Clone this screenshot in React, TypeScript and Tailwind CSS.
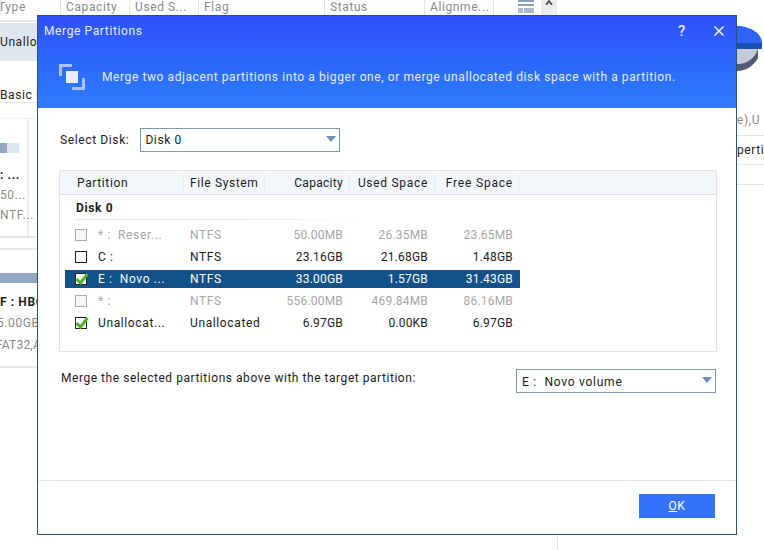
const font = { fontFamily: "Roboto, sans-serif" };

function Check({ state }: { state: "off" | "dis" | "on" }) {
  if (state === "dis") return <span className="block w-3 h-3 border border-[#a8a8a8] bg-[#f4f4f4]" />;
  if (state === "off") return <span className="block w-3 h-3 border border-[#222] bg-white" />;
  return (
    <span className="block relative w-3 h-3 border border-[#222] bg-white">
      <svg viewBox="0 0 14 14" className="absolute left-[-1px] top-[-2px] w-[14px] h-[14px]">
        <path d="M1.5 7 L5.5 11 L12.5 2" fill="none" stroke="#4db31c" strokeWidth="3" />
      </svg>
    </span>
  );
}

const rows = [
  { c: "dis", n: "* :  Reser...", fs: "NTFS", a: "50.00MB", b: "26.35MB", d: "23.65MB", k: "dis" },
  { c: "off", n: "C :", fs: "NTFS", a: "23.16GB", b: "21.68GB", d: "1.48GB", k: "norm" },
  { c: "on", n: "E :  Novo ...", fs: "NTFS", a: "33.00GB", b: "1.57GB", d: "31.43GB", k: "sel" },
  { c: "dis", n: "* :", fs: "NTFS", a: "556.00MB", b: "469.84MB", d: "86.16MB", k: "dis" },
  { c: "on", n: "Unallocat...", fs: "Unallocated", a: "6.97GB", b: "0.00KB", d: "6.97GB", k: "norm" },
] as const;

function Caret() {
  return <span className="w-0 h-0 mb-[3px] border-l-[5px] border-r-[5px] border-t-[6px] border-l-transparent border-r-transparent border-t-[#6f90bd]" />;
}

function Background() {
  return (
    <div className="absolute inset-0 text-[12px] tracking-[0.6px] text-[#8a8a8a]">
      {[["Type", -2, 0], ["Capacity", 66, 60], ["Used S...", 135, 129], ["Flag", 204, 198], ["Status", 330, 324], ["Alignme...", 430, 424]].map(([t, x, s]) => (
        <div key={t as string}>
          <span className="absolute top-0 leading-[14px]" style={{ left: x as number }}>{t}</span>
          <span className="absolute top-0 h-[15px] w-px bg-[#e4e4e4]" style={{ left: s as number }} />
        </div>
      ))}
      <span className="absolute left-[493px] top-0 h-[15px] w-px bg-[#e4e4e4]" />
      <svg viewBox="0 0 16 14" className="absolute left-[518px] top-0 w-4 h-[14px]">
        <rect x="0" y="0" width="16" height="2" fill="#8ea0ba" />
        <rect x="0" y="4" width="16" height="2" fill="#8ea0ba" />
        <rect x="0" y="8" width="5" height="5" fill="#aebbd0" />
        <rect x="6" y="8" width="10" height="5" fill="#aebbd0" />
      </svg>
      <div className="absolute left-[541px] top-0 w-4 h-[15px] bg-[#ececec] flex justify-center">
        <svg viewBox="0 0 8 5" className="w-2 h-[5px]"><path d="M1 5 L4 1 L7 5" stroke="#444" strokeWidth="1.6" fill="none" /></svg>
      </div>
      <div className="absolute left-0 top-[20px] w-[37px] h-[2px] bg-[#e8e8e8]" />
      <div className="absolute left-0 top-[23px] w-[37px] h-[38px] bg-[#dfe6f0] text-[#222] leading-[38px] overflow-hidden whitespace-nowrap">Unalloc</div>
      <div className="absolute left-0 top-[88px] w-[37px] text-[#222] leading-[14px] overflow-hidden whitespace-nowrap">Basic D</div>
      <div className="absolute left-0 top-[102px] w-[37px] h-px bg-[#e4e4e4]" />
      <div className="absolute left-0 top-[118px] w-[37px] h-px bg-[#eeeeee]" />
      <div className="absolute left-[27px] top-[118px] w-[2px] h-[118px] bg-[#eeeeee]" />
      <div className="absolute left-0 top-[143px] w-[19px] h-[10px] bg-[#dfe6f0]"><div className="w-[7px] h-full bg-[#94a8c4]" /></div>
      <div className="absolute left-0 top-[168px] font-bold text-[#222] leading-[14px] whitespace-nowrap">: ...</div>
      <div className="absolute left-0 top-[188px] leading-[14px]">50...</div>
      <div className="absolute left-0 top-[208px] leading-[14px]">NTF...</div>
      <div className="absolute left-0 top-[236px] w-[37px] h-[2px] bg-[#e8e8e8]" />
      <div className="absolute left-0 top-[248px] w-[37px] h-[2px] bg-[#e8e8e8]" />
      <div className="absolute left-0 top-[273px] w-[37px] h-[10px] bg-[#94a8c4]" />
      <div className="absolute left-0 top-[295px] w-[37px] font-bold text-[#222] leading-[14px] overflow-hidden whitespace-nowrap">F : HBO</div>
      <div className="absolute left-[-3px] top-[316px] w-[40px] leading-[14px] overflow-hidden whitespace-nowrap">5.00GB</div>
      <div className="absolute left-[-4px] top-[338px] w-[41px] leading-[14px] overflow-hidden whitespace-nowrap tracking-[0.2px]">FAT32,A</div>
      <div className="absolute left-0 top-[366px] w-[37px] h-[2px] bg-[#e8e8e8]" />
      <svg viewBox="0 0 27 46" className="absolute left-[737px] top-[26px] w-[27px] h-[46px]">
        <path d="M0 0 C 14 0 25 8 25 17 L25 22 L0 22 Z" fill="#2f63f5" />
        <rect x="0" y="17" width="25" height="6" fill="#1a4fb8" />
        <path d="M0 23 H21 C 19 33 10 38 0 38 Z" fill="#c5ccd8" />
        <path d="M21 23 V32 C 16 41 8 45 0 45 V38 C 10 38 18 32 21 23 Z" fill="#505a72" />
      </svg>
      <div className="absolute left-[730px] top-[113px] text-[#8a8a8a] leading-[14px] whitespace-nowrap">ee),U</div>
      <div className="absolute left-[737px] top-[135px] w-[27px] h-px bg-[#e4e4e4]" />
      <div className="absolute left-[737px] top-[143px] text-[#222] leading-[14px] whitespace-nowrap">pertie</div>
      <div className="absolute left-[737px] top-[164px] w-[27px] h-px bg-[#e4e4e4]" />
      <div className="absolute left-[737px] top-[184px] w-[27px] h-px bg-[#e4e4e4]" />
      <div className="absolute left-[557px] top-[535px] w-px h-[15px] bg-[#e4e4e4]" />
    </div>
  );
}

export default function App() {
  return (
    <div className="relative w-[764px] h-[550px] overflow-hidden bg-white" style={font}>
      <Background />
      <div className="absolute left-[37px] top-[15px] w-[700px] h-[520px] border border-[#2d5273] bg-white flex flex-col">
        <div className="h-[92px] shrink-0 bg-gradient-to-b from-[#2f4ffe] to-[#2e7dfd] text-white flex flex-col">
          <div className="flex items-center h-[30px] pl-[6px] pr-[10px] text-[12px] tracking-[0.62px] text-[#e6edff]">
            <span className="flex-1">Merge Partitions</span>
            <span className="w-[35px] text-[15px] font-medium">?</span>
            <svg viewBox="0 0 12 12" className="w-3 h-3 mr-[1px]"><path d="M1.5 1.5 L10.5 10.5 M10.5 1.5 L1.5 10.5" stroke="#e6edff" strokeWidth="1.6" /></svg>
          </div>
          <div className="flex items-center pl-[21px] mt-[18px] gap-[17px] text-[12px] tracking-[0.59px] text-[#e6edff]">
            <svg viewBox="0 0 26 26" className="w-[26px] h-[26px]">
              <path d="M1.5 12 V1.5 H13" fill="none" stroke="#a9c4fb" strokeWidth="3" />
              <path d="M24.5 14 V24.5 H13" fill="none" stroke="#a9c4fb" strokeWidth="3" />
              <rect x="7" y="7" width="12" height="12" fill="#e8eeff" />
            </svg>
            <span>Merge two adjacent partitions into a bigger one, or merge unallocated disk space with a partition.</span>
          </div>
        </div>

        <div className="flex-1 flex flex-col text-[12px] tracking-[0.62px] text-[#1c1c1c]">
          <div className="flex items-center mt-[20px] ml-[22px] gap-[11px]">
            <span>Select Disk:</span>
            <div className="w-[200px] h-[24px] border border-[#7d98b4] flex items-center justify-between pl-[4px] pr-[3px]">
              <span>Disk 0</span>
              <Caret />
            </div>
          </div>

          <div className="mt-[18px] ml-[21px] w-[658px] h-[182px] border border-[#e3e3e3]">
            <div className="h-[24px] pt-[2px] bg-[#f3f7fc] border-b border-[#dbe1ea] grid grid-cols-[124px_81px_85px_85px_84px] items-center">
              <span className="pl-[17px] border-r border-[#e6ebf2] h-[17px] leading-[17px]">Partition</span>
              <span className="pl-[6px] border-r border-[#e6ebf2] h-[17px] leading-[17px]">File System</span>
              <span className="text-right pr-[6px] border-r border-[#e6ebf2] h-[17px] leading-[17px] tracking-[0.3px]">Capacity</span>
              <span className="text-right pr-[6px] border-r border-[#e6ebf2] h-[17px] leading-[17px] tracking-[0.7px]">Used Space</span>
              <span className="text-right pr-[5px] border-r border-[#e6ebf2] h-[17px] leading-[17px] tracking-[0.8px]">Free Space</span>
            </div>
            <div className="pl-[5px]">
              <div className="h-[25px] ml-[11px] relative flex items-center font-bold">
                Disk 0
                <span className="absolute left-0 bottom-0 w-[295px] h-px bg-gradient-to-r from-gray-200 via-gray-200 to-white" />
              </div>
              <div className="pt-[4px]">
                {rows.map((r) => (
                  <div key={r.n} className="h-[22px] flex items-center">
                    <div
                      className={
                        "w-[455px] h-[18px] grid grid-cols-[125px_75px_78px_85px_85px] items-center leading-[18px] " +
                        (r.k === "sel" ? "bg-[#125189] text-white" : r.k === "dis" ? "text-[#a6a6a6]" : "text-[#1c1c1c]")
                      }
                    >
                      <div className="flex items-center pl-[10px] gap-[11px] whitespace-nowrap">
                        <Check state={r.c} />
                        <span className="whitespace-pre">{r.n}</span>
                      </div>
                      <span>{r.fs}</span>
                      <span className="text-right tracking-[0.2px]">{r.a}</span>
                      <span className="text-right tracking-[0.2px]">{r.b}</span>
                      <span className="text-right tracking-[0.2px]">{r.d}</span>
                    </div>
                  </div>
                ))}
              </div>
            </div>
          </div>

          <div className="flex items-center justify-between mt-[17px] ml-[23px] mr-[20px]">
            <span className="mb-[6px] tracking-[0.54px]">Merge the selected partitions above with the target partition:</span>
            <div className="w-[200px] h-[24px] border border-[#7d98b4] flex items-center justify-between pl-[5px] pr-[3px]">
              <span className="whitespace-pre tracking-[0.75px] pt-[1px]">E :  Novo volume</span>
              <Caret />
            </div>
          </div>

          <div className="mt-auto h-[54px] border-t border-[#e6e6e6] flex items-start justify-end pt-[13px] pr-[21px]">
            <div className="w-[76px] h-[24px] bg-[#3574fa] text-white flex items-center justify-center"><span className="underline">O</span>K</div>
          </div>
        </div>
      </div>
    </div>
  );
}
